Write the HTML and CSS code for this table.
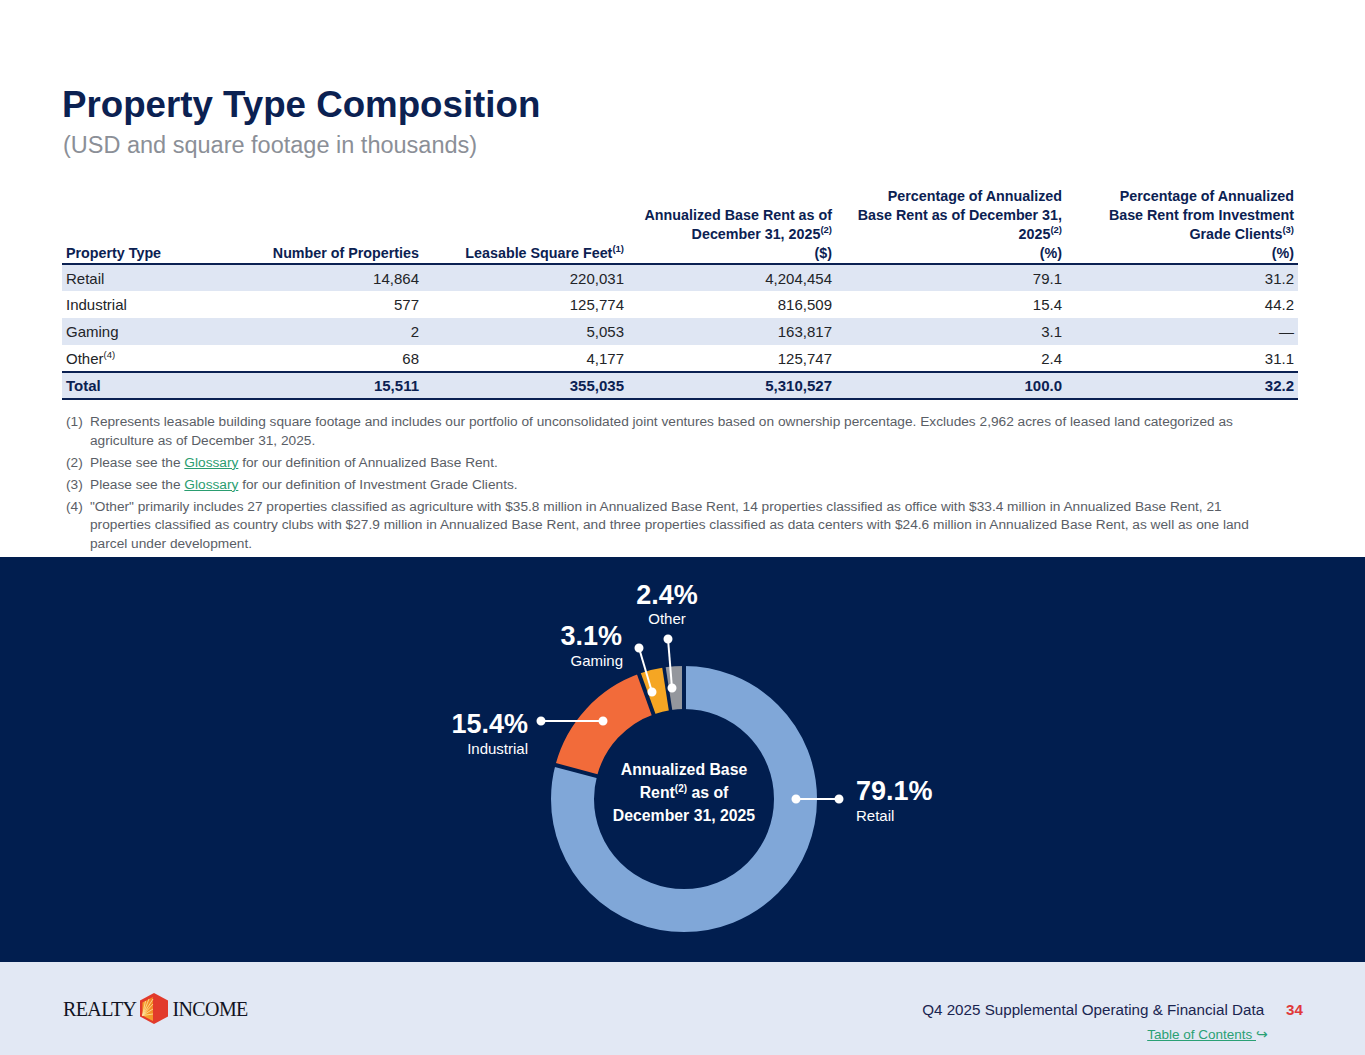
FILE: index.html
```html
<!DOCTYPE html>
<html lang="en">
<head>
<meta charset="utf-8">
<title>Property Type Composition</title>
<link rel="stylesheet" href="styles.css">
</head>
<body>
<div class="page">
  <section class="top">
    <h1 class="title">Property Type Composition</h1>
    <p class="subtitle">(USD and square footage in thousands)</p>
    <table class="data">
      <colgroup>
        <col class="w1"><col class="w2"><col class="w3"><col class="w4"><col class="w5"><col class="w6">
      </colgroup>
      <thead>
        <tr>
          <th class="left">Property Type</th>
          <th>Number of Properties</th>
          <th>Leasable Square Feet<span class="sup">(1)</span></th>
          <th>Annualized Base Rent as of<br>December 31, 2025<span class="sup">(2)</span><br>($)</th>
          <th>Percentage of Annualized<br>Base Rent as of December 31,<br>2025<span class="sup">(2)</span><br>(%)</th>
          <th>Percentage of Annualized<br>Base Rent from Investment<br>Grade Clients<span class="sup">(3)</span><br>(%)</th>
        </tr>
      </thead>
      <tbody>
        <tr><td class="left">Retail</td><td>14,864</td><td>220,031</td><td>4,204,454</td><td>79.1</td><td>31.2</td></tr>
        <tr><td class="left">Industrial</td><td>577</td><td>125,774</td><td>816,509</td><td>15.4</td><td>44.2</td></tr>
        <tr><td class="left">Gaming</td><td>2</td><td>5,053</td><td>163,817</td><td>3.1</td><td>—</td></tr>
        <tr><td class="left">Other<span class="sup">(4)</span></td><td>68</td><td>4,177</td><td>125,747</td><td>2.4</td><td>31.1</td></tr>
        <tr class="total"><td class="left">Total</td><td>15,511</td><td>355,035</td><td>5,310,527</td><td>100.0</td><td>32.2</td></tr>
      </tbody>
    </table>
    <ol class="notes">
      <li><span class="n">(1)</span><span class="t">Represents leasable building square footage and includes our portfolio of unconsolidated joint ventures based on ownership percentage. Excludes 2,962 acres of leased land categorized as agriculture as of December 31, 2025.</span></li>
      <li><span class="n">(2)</span><span class="t">Please see the <a href="#">Glossary</a> for our definition of Annualized Base Rent.</span></li>
      <li><span class="n">(3)</span><span class="t">Please see the <a href="#">Glossary</a> for our definition of Investment Grade Clients.</span></li>
      <li><span class="n">(4)</span><span class="t">"Other" primarily includes 27 properties classified as agriculture with $35.8 million in Annualized Base Rent, 14 properties classified as office with $33.4 million in Annualized Base Rent, 21 properties classified as country clubs with $27.9 million in Annualized Base Rent, and three properties classified as data centers with $24.6 million in Annualized Base Rent, as well as one land parcel under development.</span></li>
    </ol>
  </section>

  <section class="chart">
    <svg class="donut" width="1365" height="405" viewBox="0 0 1365 405">
      <g transform="rotate(-90 684 242)" fill="none" stroke-width="43">
        <circle cx="684" cy="242" r="111.5" stroke="#80a7d8" stroke-dasharray="554.16 800"/>
        <circle cx="684" cy="242" r="111.5" stroke="#f26b3a" stroke-dasharray="107.89 800" stroke-dashoffset="-554.16"/>
        <circle cx="684" cy="242" r="111.5" stroke="#f5a623" stroke-dasharray="21.72 800" stroke-dashoffset="-662.05"/>
        <circle cx="684" cy="242" r="111.5" stroke="#94979d" stroke-dasharray="16.81 800" stroke-dashoffset="-683.77"/>
      </g>
      <g stroke="#011e4f" stroke-width="4">
        <line x1="684" y1="156" x2="684" y2="105"/>
        <line x1="598.9" y1="219.6" x2="552.5" y2="207.3"/>
        <line x1="654.2" y1="159.2" x2="638" y2="114.2"/>
      </g>
      <g stroke="#011e4f" stroke-width="3.5">
        <line x1="670.8" y1="155" x2="663.5" y2="107.5"/>
      </g>
      <g stroke="#ffffff" stroke-width="2" fill="#ffffff">
        <line x1="796" y1="242" x2="839" y2="242"/>
        <circle cx="796" cy="242" r="3.5"/><circle cx="839" cy="242" r="3.5"/>
        <line x1="541" y1="164" x2="603" y2="164"/>
        <circle cx="541" cy="164" r="3.5"/><circle cx="603" cy="164" r="3.5"/>
        <line x1="639" y1="91" x2="652" y2="135"/>
        <circle cx="639" cy="91" r="3.5"/><circle cx="652" cy="135" r="3.5"/>
        <line x1="668" y1="82" x2="672" y2="131"/>
        <circle cx="668" cy="82" r="3.5"/><circle cx="672" cy="131" r="3.5"/>
      </g>
      <g class="lbl">
        <text class="pct" x="856" y="243">79.1%</text>
        <text class="cat" x="856" y="264">Retail</text>
        <text class="pct" x="528" y="176" text-anchor="end">15.4%</text>
        <text class="cat" x="528" y="197" text-anchor="end">Industrial</text>
        <text class="pct" x="622" y="88" text-anchor="end">3.1%</text>
        <text class="cat" x="623" y="109" text-anchor="end">Gaming</text>
        <text class="pct" x="667" y="47" text-anchor="middle">2.4%</text>
        <text class="cat" x="667" y="67" text-anchor="middle">Other</text>
        <text class="ctr" x="684" y="218" text-anchor="middle">Annualized Base</text>
        <text class="ctr" x="684" y="241" text-anchor="middle">Rent<tspan class="ctr-sup" dy="-6">(2)</tspan><tspan dy="6"> as of</tspan></text>
        <text class="ctr" x="684" y="264" text-anchor="middle">December 31, 2025</text>
      </g>
    </svg>
  </section>

  <footer class="footer">
    <div class="logo">
      <span class="logo-word">REALTY</span>
      <svg class="logo-mark" width="28" height="31" viewBox="0 0 28 31">
        <defs>
          <linearGradient id="lg" x1="0" y1="1" x2="1" y2="0">
            <stop offset="0" stop-color="#f7b531"/>
            <stop offset="1" stop-color="#f07a22"/>
          </linearGradient>
        </defs>
        <polygon points="14,0 28,7.5 28,23.5 14,31 0,23.5 0,7.5" fill="#e23a2b"/>
        <polygon points="2.5,9.5 13,4 13,28 2.5,22.5" fill="url(#lg)"/>
        <g stroke="#ffe3a0" stroke-width="0.8">
          <line x1="2.5" y1="22.5" x2="13" y2="6"/>
          <line x1="2.5" y1="22.5" x2="13" y2="11"/>
          <line x1="2.5" y1="22.5" x2="13" y2="16"/>
          <line x1="2.5" y1="22.5" x2="13" y2="21"/>
          <line x1="2.5" y1="22.5" x2="9" y2="6"/>
          <line x1="2.5" y1="22.5" x2="5.5" y2="8"/>
        </g>
      </svg>
      <span class="logo-word">INCOME</span>
    </div>
    <div class="meta">
      <div class="meta-line"><span class="doc">Q4 2025 Supplemental Operating &amp; Financial Data</span><span class="pg">34</span></div>
      <a class="toc" href="#">Table of Contents <span class="arrow">↪</span></a>
    </div>
  </footer>
</div>
</body>
</html>
```

FILE: styles.css
```css
* { box-sizing: border-box; }

body {
  margin: 0;
  background: #ffffff;
  font-family: "Liberation Sans", Arial, sans-serif;
}

.page {
  width: 1365px;
}

/* ---------- top white section ---------- */
.top {
  height: 557px;
  padding: 83px 0 0 62px;
}

.title {
  margin: 0;
  font-size: 36.7px;
  line-height: 44px;
  font-weight: 700;
  color: #0b2152;
}

.subtitle {
  margin: 4px 0 0 1px;
  font-size: 23.5px;
  line-height: 28px;
  color: #8b8f97;
}

.data {
  margin-top: 28px;
  width: 1236px;
  border-collapse: collapse;
  table-layout: fixed;
}

.w1 { width: 166px; }
.w2 { width: 195px; }
.w3 { width: 205px; }
.w4 { width: 208px; }
.w5 { width: 230px; }
.w6 { width: 232px; }

.data th {
  font-size: 14.3px;
  line-height: 19px;
  font-weight: 700;
  color: #0b2152;
  text-align: right;
  vertical-align: bottom;
  padding: 0 4px 0;
  border-bottom: 2px solid #0b2152;
  white-space: nowrap;
}

.data td {
  height: 27px;
  padding: 0 4px;
  font-size: 15px;
  color: #222428;
  text-align: right;
  vertical-align: middle;
}

.data .left { text-align: left; }

.data tbody tr:nth-child(odd) td { background: #dfe6f3; }

.data tr.total td {
  font-weight: 700;
  color: #0b2152;
  border-top: 2px solid #0b2152;
  border-bottom: 2px solid #0b2152;
}

.sup {
  font-size: 9.5px;
  line-height: 0;
  position: relative;
  top: -0.6em;
  font-weight: inherit;
}

.notes {
  list-style: none;
  margin: 13px 0 0;
  padding: 0 0 0 4px;
  width: 1208px;
  font-size: 13.7px;
  line-height: 18.5px;
  color: #5a5e66;
}

.notes li {
  display: flex;
  margin-bottom: 3.5px;
}

.notes .n { flex: 0 0 24px; }
.notes .t { flex: 1; }

.notes a {
  color: #2a9d70;
  text-decoration: underline;
}

/* ---------- chart band ---------- */
.chart {
  height: 405px;
  background: #011e4f;
}

.donut { display: block; }

.lbl text { font-family: "Liberation Sans", Arial, sans-serif; fill: #ffffff; }
.lbl .pct { font-size: 27px; font-weight: 700; }
.lbl .cat { font-size: 15px; }
.lbl .ctr { font-size: 15.8px; font-weight: 700; }
.lbl .ctr-sup { font-size: 10px; }

/* ---------- footer ---------- */
.footer {
  height: 93px;
  background: #e2e8f4;
  display: flex;
  justify-content: space-between;
  align-items: flex-start;
  padding: 0 62px 0 63px;
}

.logo {
  margin-top: 31px;
  height: 31px;
  display: flex;
  align-items: center;
  gap: 4px;
}

.logo-word {
  font-family: "Liberation Serif", "Times New Roman", serif;
  font-size: 20px;
  letter-spacing: -0.6px;
  color: #111322;
  line-height: 1;
}

.logo-mark { display: block; }

.meta {
  margin-top: 39px;
  display: flex;
  flex-direction: column;
  align-items: flex-end;
}

.meta-line {
  display: flex;
  gap: 22px;
  font-size: 15.2px;
  line-height: 18px;
}

.doc { color: #1a2550; }

.pg {
  color: #e0393a;
  font-weight: 700;
}

.toc {
  margin: 8px 35px 0 0;
  font-size: 13.5px;
  line-height: 16px;
  color: #2aa075;
  text-decoration: underline;
}

.toc .arrow { text-decoration: none; display: inline-block; }
```
